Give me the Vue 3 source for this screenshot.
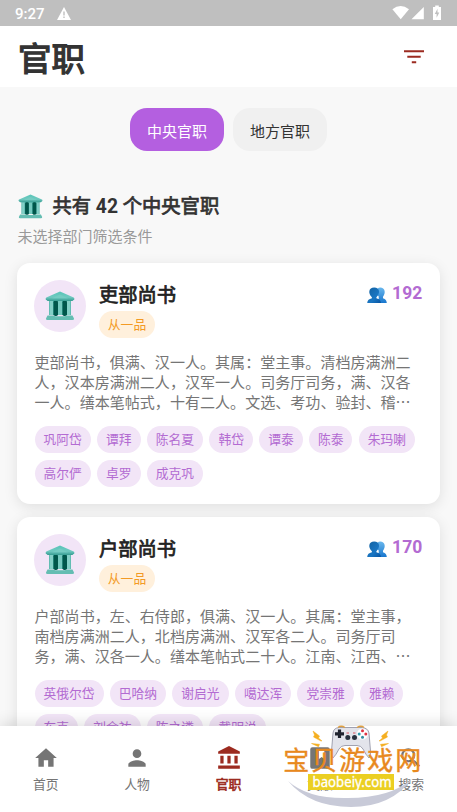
<script setup>
const cards = [
  {
    title: '吏部尚书', rank: '从一品', count: 192,
    lines: ['吏部尚书，俱满、汉一人。其属：堂主事。清档房满洲二', '人，汉本房满洲二人，汉军一人。司务厅司务，满、汉各', '一人。缮本笔帖式，十有二人。文选、考功、验封、稽⋯'],
    chips: ['巩阿岱', '谭拜', '陈名夏', '韩岱', '谭泰', '陈泰', '朱玛喇', '高尔俨', '卓罗', '成克巩']
  },
  {
    title: '户部尚书', rank: '从一品', count: 170,
    lines: ['户部尚书，左、右侍郎，俱满、汉一人。其属：堂主事，', '南档房满洲二人，北档房满洲、汉军各二人。司务厅司', '务，满、汉各一人。缮本笔帖式二十人。江南、江西、⋯'],
    chips: ['英俄尔岱', '巴哈纳', '谢启光', '噶达浑', '党崇雅', '雅赖', '车克', '刘余祐', '陈之遴', '戴明说']
  }
]
const nav = [
  { label: '首页', d: 'M10 20v-6h4v6h5v-8h3L12 3 2 12h3v8z' },
  { label: '人物', d: 'M12 12c2.2 0 4-1.8 4-4s-1.8-4-4-4-4 1.8-4 4 1.8 4 4 4zm0 2c-2.7 0-8 1.3-8 4v2h16v-2c0-2.700-5.300-4-8-4z' },
  { label: '官职', active: true, d: 'M4 10v7h3v-7zm6.500 0v7h3v-7zM2 22h20v-3H2zm15-12v7h3v-7zM12 1 2 6v2h20V6z' },
  { label: '文献', d: 'M5 2h14q2 0 2 2v16q0 2-2 2H5q-2 0-2-2V4q0-2 2-2zm6 3v8l2.500-2 2.500 2V5z' },
  { label: '搜索', d: 'M15.500 14h-.79l-.28-.27A6.471 6.471 0 0 0 16 9.500 6.500 6.500 0 1 0 9.500 16c1.610 0 3.090-.59 4.230-1.570l.27.28v.79l5 4.990L20.490 19zM9.500 14a4.500 4.500 0 1 1 0-9 4.500 4.500 0 0 1 0 9z' }
]
</script>

<template>
  <div class="screen">
    <svg class="defs" width="0" height="0">
      <defs>
        <linearGradient id="roof" x2="0" y2="1"><stop stop-color="#58c5b8" /><stop offset=".6" stop-color="#6fc9c0" /><stop offset="1" stop-color="#369c91" /></linearGradient>
        <linearGradient id="person" x2="1" y2="1"><stop stop-color="#12609f" /><stop offset=".6" stop-color="#1976c3" /><stop offset="1" stop-color="#0753a1" /></linearGradient>
        <linearGradient id="friend" x2="0" y2="1"><stop stop-color="#69b7ed" /><stop offset="1" stop-color="#1977ce" /></linearGradient>
        <symbol id="temple" viewBox="0 0 30 30">
          <path d="M4 9h22v15H4z" fill="#62bdb3" />
          <path d="M5 10h3v14H5zm17 0h3v14h-3z" fill="#83d0c7" />
          <path d="M8 10h14v14H8z" fill="#43ada0" />
          <path d="M13 10h4v14h-4z" fill="#75c9bf" />
          <rect x="8.500" y="9.500" width="4.500" height="15.500" rx="1.800" fill="#00564b" />
          <rect x="17.500" y="9.500" width="4.500" height="15.500" rx="1.800" fill="#00564b" />
          <path d="M2.500 24.500h6.500l1 .8h10l1-.8h6.500l1.500 3q.2 1.500-1.500 1.500H2.500q-1.700 0-1.500-1.500z" fill="#64bdb2" />
          <path d="M15 .6 28.700 6.500q1 .5.500 1.800L27.500 10h-25L.8 8.300Q.3 7 1.300 6.500z" fill="url(#roof)" />
          <path d="M15 3.500 7 7.200h16z" fill="#74ccc2" />
        </symbol>
        <symbol id="people" viewBox="0 0 20 16">
          <path d="M9 16q.2-3 2.700-4V9.500C8.200 6 9 .5 13.200.5c5 0 5.800 5.500 2.800 9.300v1.400c2.700.8 3.500 2 3.800 4.800z" fill="url(#friend)" />
          <path d="M.2 16c.2-2.900 1.800-4.100 4.700-4.800v-1C.8 6.500 1.500.5 7.200.5s6.300 6 2.200 9.700v1c2.900.7 4.300 1.900 4.600 4.800z" fill="url(#person)" />
        </symbol>
      </defs>
    </svg>

    <div class="status">
      <span>9:27</span>
      <svg class="warn" viewBox="0 0 14 13"><path d="M7 0 14 13H0z" fill="#fff" /><path d="M6.300 4.500h1.400v4H6.300zm0 5h1.400V11H6.300z" fill="#bfbfbf" /></svg>
      <svg class="signals" viewBox="0 0 50 16">
        <path d="M.4 4.200Q8.500-2.400 17 4.200L8.700 14.300z" fill="#fff" />
        <path d="M19.500 14.300h12.300V2z" fill="#fff" />
        <path d="M41 2h2.200V.5h3.600V2H49v13H41z" fill="#fff" />
        <path d="M45.500 3.800 42.800 9h1.800v3.700l2.700-5.200h-1.800z" fill="#bfbfbf" />
      </svg>
    </div>
    <header class="header">
      <h1>官职</h1>
      <svg class="filter" viewBox="0 0 20 14"><path d="M0 .2h20v2H0zm3.300 5.600h13.400v2H3.300zm4.500 5.400h4.400v2H7.800z" fill="#9c2b20" /></svg>
    </header>

    <main class="main">
      <div class="tabs"><span class="tab on">中央官职</span><span class="tab">地方官职</span></div>
      <div class="summary"><svg class="temple-sm"><use href="#temple" /></svg><h2>共有 <b>42</b> 个中央官职</h2></div>
      <p class="hint">未选择部门筛选条件</p>
      <article v-for="c in cards" :key="c.title" class="card">
        <div class="top">
          <div class="avatar"><svg><use href="#temple" /></svg></div>
          <div class="info"><h3>{{ c.title }}</h3><span class="rank">{{ c.rank }}</span></div>
          <div class="count"><svg><use href="#people" /></svg><b>{{ c.count }}</b></div>
        </div>
        <div class="desc"><div v-for="l in c.lines" :key="l">{{ l }}</div></div>
        <div class="chips"><span v-for="n in c.chips" :key="n">{{ n }}</span></div>
      </article>
    </main>

    <nav class="nav">
      <div v-for="n in nav" :key="n.label" class="item" :class="{ active: n.active }">
        <svg viewBox="0 0 24 24"><path :d="n.d" fill="currentColor" fill-rule="evenodd" /></svg>
        <span>{{ n.label }}</span>
      </div>
    </nav>

    <svg class="mark" viewBox="280 722 150 90">
      <path d="M288 781Q308 799 348 798 390 798 412 779 391 807 351 807 310 807 288 781Z" fill="#c8cad8" />
      <path d="M333 758Q331 756 331.500 751L333 733Q333.500 728 339 727.500H362Q368 728 369 733L370.500 751Q371 756 369 758 366 755 363 749 361 745.500 357 745.500H345Q341 745.500 339 749 336 755 333 758Z" fill="#e3e4eb" stroke="#8b8d9e" stroke-width=".8" />
      <path d="M338 727.500q3-2.500 7 0m12 0q4-2.500 7 0" fill="none" stroke="#e0a040" stroke-width="1.300" />
      <path d="M339.500 729.500v8.500M335 733.800h9" stroke="#20232f" stroke-width="3.200" />
      <circle cx="362.500" cy="734" r="5.500" fill="#fff" />
      <circle cx="362.500" cy="730.700" r="1.500" fill="#df3544" /><circle cx="362.500" cy="737.300" r="1.500" fill="#318da1" /><circle cx="359.200" cy="734" r="1.500" fill="#319caf" /><circle cx="365.800" cy="734" r="1.500" fill="#df3544" />
      <circle cx="347.800" cy="737.500" r="2.500" fill="#28313e" /><circle cx="354.500" cy="737.500" r="2.500" fill="#28313e" />
      <path d="M346.500 733h2.500m4 0h2.500" stroke="#d85461" />
      <path d="m313 731 6.500 5-1 2 3.500 3-1.500-.2-7-3.800 1-2zm75 0-6.500 5 1 2-3.500 3 1.500-.2 7-3.800-1-2zM311.500 743.500l8 .8-1 2.400zm77 0-8 .8 1 2.400z" fill="#f5af20" stroke="#f5af20" stroke-width=".5" />
      <text x="283.300" y="770.300" class="brand" textLength="138" lengthAdjust="spacing">宝贝游戏网</text>
      <rect x="308" y="774" width="86" height="16" fill="#ebcf22" />
      <text x="312.500" y="786.500" class="url" textLength="79" lengthAdjust="spacingAndGlyphs">baobeiy.com</text>
    </svg>
  </div>
</template>

<style>
body { margin: 0; overflow: hidden; }
</style>
<style scoped>
* { box-sizing: border-box; }
.screen { position: relative; width: 457px; height: 812px; overflow: hidden; display: flex; flex-direction: column; background: #f8f8f8; font-family: Roboto, "Noto Sans CJK SC", sans-serif; color: #333; }
.defs { position: absolute; }
svg { display: block; flex: none; }
h1, h2, h3, p { margin: 0; }
h1, h2, h3 { font-weight: 400; }
.status { height: 26px; flex: none; background: #bfbfbf; color: #fff; display: flex; align-items: center; padding: 1px 15px 0; font-size: 15px; font-weight: 500; }
.warn { width: 14px; height: 13px; margin-left: 12.500px; }
.signals { width: 50px; height: 16px; margin-left: auto; margin-right: 0; margin-top: -2px; }
.header { height: 61px; flex: none; background: #fff; display: flex; align-items: center; justify-content: space-between; padding: 0 33px 0 18px; }
h1 { font-size: 33.500px; line-height: 48px; margin-top: 6px; -webkit-text-stroke: 1.300px currentColor; }
.filter { width: 20px; height: 14px; }
.main { flex: 1; min-height: 0; overflow: hidden; padding: 21px 17px 0; }
.tabs { display: flex; justify-content: center; gap: 9px; }
.tab { width: 94px; height: 43px; border-radius: 17px; background: #f0f0f0; display: flex; align-items: center; justify-content: center; font-size: 15px; padding-top: 1px; }
.tab.on { background: #b45fe0; color: #fff; }
.summary { display: flex; align-items: center; height: 28px; margin-top: 41px; padding-left: 1px; }
.temple-sm { width: 25px; height: 25px; margin-right: 9.500px; }
h2 { font-size: 19.300px; line-height: 28px; margin-top: 2px; -webkit-text-stroke: .75px currentColor; }
h2 b { -webkit-text-stroke: 0; }
.hint { margin-left: .5px; margin-top: 6px; font-size: 15px; line-height: 22px; color: #999; }
.card { height: 240.500px; margin-top: 15px; padding: 17px 17.500px; background: #fff; border-radius: 13px; box-shadow: 0 3px 14px rgba(0, 0, 0, .1); }
.card + .card { margin-top: 13.500px; }
.top { display: flex; height: 58px; }
.avatar { width: 52px; height: 52px; margin-left: -.5px; border-radius: 50%; background: #f2e5f7; display: flex; align-items: center; justify-content: center; }
.avatar svg { width: 30px; height: 30px; }
.info { margin-left: 13px; }
h3 { font-size: 19.300px; line-height: 28px; margin-top: 2px; color: #222; -webkit-text-stroke: .75px currentColor; }
.rank { display: block; width: 56px; height: 27px; margin-top: 1px; border-radius: 14px; background: #fff0dc; color: #f39a24; font-size: 12.800px; line-height: 27.500px; text-align: center; }
.count { margin-left: auto; display: flex; align-items: flex-start; color: #b36bd2; }
.count svg { width: 20px; height: 16px; margin: 6.500px 5px 0 0; }
.count b { font-size: 17.500px; line-height: 26px; letter-spacing: .1px; }
.desc { margin-top: 15px; height: 61px; font-size: 15.050px; line-height: 20.200px; color: #757575; white-space: nowrap; }
.chips { display: flex; flex-wrap: wrap; gap: 6.700px 6.300px; margin-top: 12px; margin-right: -4px; }
.chips span { height: 27px; border-radius: 14px; padding: 0 9px; background: #f2e5f7; color: #b36bd2; font-size: 12.750px; line-height: 27px; }
.nav { position: relative; height: 86px; flex: none; background: #fff; display: flex; box-shadow: 0 -3px 14px rgba(0, 0, 0, .12); }
.item { flex: 1; display: flex; flex-direction: column; align-items: center; padding-top: 18.500px; color: #757575; font-size: 12.800px; }
.item svg { width: 26px; height: 26px; }
.item span { line-height: 20px; margin-top: 4.500px; }
.item.active { color: #9c2b20; }
.item.active span { -webkit-text-stroke: .6px currentColor; }
.mark { position: absolute; left: 280px; top: 722px; width: 150px; height: 90px; }
.brand { font-family: "Noto Sans CJK SC", sans-serif; font-size: 26px; font-weight: 400; fill: #e8891d; stroke: #e8891d; stroke-width: .4px; }
.url { font-family: "Noto Sans", sans-serif; font-size: 14px; fill: #fff; stroke: #fff; stroke-width: .3px; }
</style>
